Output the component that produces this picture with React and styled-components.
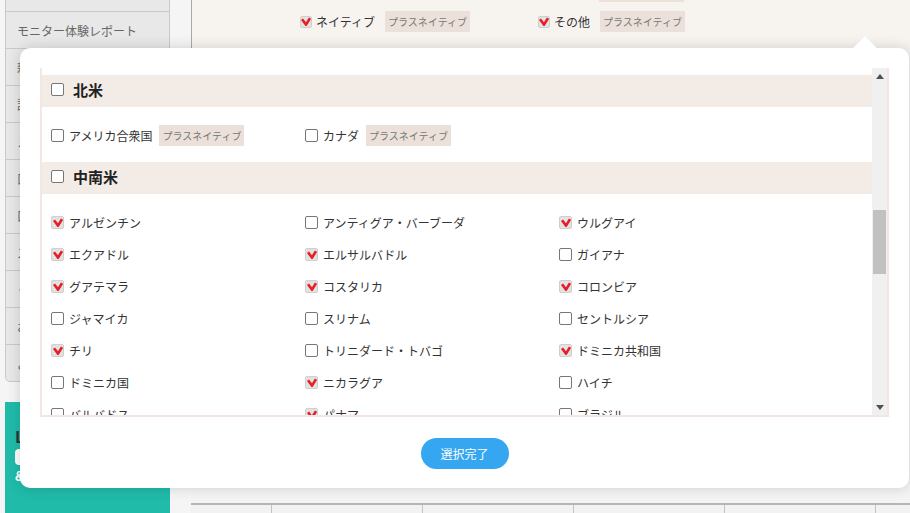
import React, { useLayoutEffect, useRef, useState } from "react";
import styled, { createGlobalStyle } from "styled-components";
import { FaCheck } from "react-icons/fa";

const GlobalStyle = createGlobalStyle`
  html, body {
    margin: 0;
    padding: 0;
    overflow: hidden;
  }
  body {
    font-family: "Noto Sans CJK JP", "Noto Sans", sans-serif;
    color: #333;
    background: #f4f4f4;
  }
`;

const Page = styled.div`
  position: relative;
  display: flex;
  width: 910px;
  height: 513px;
  overflow: hidden;
`;

const Sidebar = styled.aside`
  width: 165px;
  padding: 0 21px 0 5px;
  background: #f5f5f5;
  flex-shrink: 0;
`;

const Menu = styled.ul`
  list-style: none;
  margin: -26px 0 0;
  padding: 0;
  border: 1px solid #c9c9c9;
  border-radius: 0 0 5px 5px;
  background: #e8e8e8;
  overflow: hidden;
`;

const MenuItem = styled.li`
  height: 36px;
  display: flex;
  align-items: center;
  padding-left: 11px;
  font-size: 12px;
  color: #666;
  border-bottom: 1px solid #c9c9c9;
  &:last-child {
    border-bottom: 0;
  }
`;

const Banner = styled.div`
  margin-top: 20px;
  height: 130px;
  background: #20bba9;
  padding: 24px 10px 0;
  display: flex;
  flex-direction: column;
`;

const BannerTitle = styled.div`
  font-size: 16px;
  line-height: 20px;
  font-weight: 700;
  color: #333;
`;

const BannerButton = styled.div`
  margin-top: 3px;
  width: 120px;
  height: 16px;
  border-radius: 4px;
  background: #fff;
`;

const BannerText = styled.div`
  margin-top: 3px;
  font-size: 13px;
  line-height: 16px;
  color: #fff;
  font-weight: 700;
`;

const Main = styled.main`
  flex: 1;
  display: flex;
  flex-direction: column;
  background: #f4f4f4;
`;

const FilterBar = styled.div`
  flex-shrink: 0;
  height: 48px;
  box-sizing: border-box;
  padding: 11px 10px 0 108px;
  border-left: 1px solid #a9a9a9;
  background: #f7f4f0;
  display: flex;
  align-items: flex-start;
  justify-content: space-between;
  overflow: hidden;
`;

const FilterGrid = styled.div`
  margin-top: -30px;
  display: grid;
  grid-template-columns: 238px 238px;
  row-gap: 9px;
`;

const Option = styled.label`
  display: flex;
  align-items: center;
  height: ${(p) => p.$h || 21}px;
  font-size: 12px;
  color: #333;
  white-space: nowrap;
`;

const Label = styled.span`
  margin-left: ${(p) => p.$gap || 5}px;
`;

const Tag = styled.span`
  margin-left: ${(p) => p.$gap || 7}px;
  height: 21px;
  line-height: 21px;
  padding: 0 3px;
  font-size: 10px;
  color: #777;
  background: #ece1da;
`;

const Customize = styled.a`
  display: flex;
  align-items: center;
  gap: 4px;
  height: 21px;
  font-size: 12px;
  color: #333;
  span {
    text-decoration: underline;
  }
  svg {
    color: #444;
  }
`;

const Content = styled.div`
  flex: 1;
  padding-top: 455px;
`;

const TableHead = styled.div`
  display: grid;
  grid-template-columns: 80px repeat(5, 151px);
  border-top: 2px solid #b5b5b5;
  height: 20px;
`;

const HeadCell = styled.div`
  background: #f2f2f2;
  border-left: 1px solid #c4c4c4;
  &:first-child {
    border-left: 0;
  }
`;

const Modal = styled.div`
  position: absolute;
  left: 20px;
  top: 48px;
  width: 889px;
  height: 440px;
  box-sizing: border-box;
  padding: 20px 20px 0;
  background: #fff;
  border-radius: 10px;
  box-shadow: 0 0 14px rgba(0, 0, 0, 0.16);
  display: flex;
  flex-direction: column;
`;

const Notch = styled.div`
  position: absolute;
  top: -8px;
  right: 35px;
  width: 18px;
  height: 18px;
  background: #fff;
  transform: rotate(45deg);
`;

const ScrollFrame = styled.div`
  display: flex;
  height: 349px;
  box-sizing: border-box;
  border: 2px solid #f4e6e2;
  border-top: 0;
  background: #fff;
`;

const ScrollBody = styled.div`
  position: relative;
  flex: 1;
  overflow: hidden;
`;

const ScrollBar = styled.div`
  width: 15px;
  flex-shrink: 0;
  display: flex;
  flex-direction: column;
  background: #f0f0f0;
`;

const ArrowButton = styled.div`
  height: 16px;
  display: flex;
  align-items: center;
  justify-content: center;
`;

const Track = styled.div`
  position: relative;
  flex: 1;
`;

const Thumb = styled.div`
  position: absolute;
  left: 1px;
  right: 1px;
  background: #c1c1c1;
`;

const GroupHead = styled.div`
  height: 32px;
  box-sizing: border-box;
  padding: 0 0 4px 9px;
  display: flex;
  align-items: center;
  gap: 9px;
  background: #f3ebe6;
  font-size: 15px;
  font-weight: 700;
  color: #222;
`;

const GroupList = styled.div`
  display: grid;
  grid-template-columns: repeat(3, 254px);
  grid-auto-rows: 32px;
  padding: 12px 0 11px 9px;
`;

const Footer = styled.div`
  display: flex;
  justify-content: center;
  padding-top: 21px;
`;

const DoneButton = styled.button`
  width: 88px;
  height: 31px;
  border: 0;
  border-radius: 16px;
  background: #35a7f1;
  color: #fff;
  font-family: inherit;
  font-size: 12px;
`;

const Box = styled.span`
  width: ${(p) => p.$size}px;
  height: ${(p) => p.$size}px;
  box-sizing: border-box;
  flex-shrink: 0;
  border-radius: 2px;
  border: 1px solid ${(p) => (p.$checked ? "#cfcfcf" : "#767676")};
  background: ${(p) => (p.$checked ? "#e2e2e2" : "#fff")};
  display: inline-flex;
  align-items: center;
  justify-content: center;
`;

function Check({ checked, size = 13 }) {
  return (
    <Box $checked={checked} $size={size}>
      {checked && (
        <svg width="10" height="9" viewBox="0 0 10 9">
          <path
            d="M1 2.2 L5 7.6 L9 1.2"
            fill="none"
            stroke="#ea1c24"
            strokeWidth="2.6"
            strokeLinejoin="miter"
          />
        </svg>
      )}
    </Box>
  );
}

function Arrow({ down }) {
  return (
    <svg width="8" height="5" viewBox="0 0 8 5">
      <polygon points={down ? "0,0 8,0 4,5" : "0,5 8,5 4,0"} fill="#505050" />
    </svg>
  );
}

const menu = [
  "マイページ",
  "モニター体験レポート",
  "新着情報",
  "評価・口コミ",
  "メッセージ",
  "口座情報",
  "口コミ一覧",
  "ストア",
  "くじ引き",
  "お気に入り",
  "よくある質問",
];

const c = (name, checked = false, tag = false) => ({ name, checked, tag });

const groups = [
  {
    name: "アジア",
    items: [
      "インド", "インドネシア", "韓国", "カンボジア", "シンガポール", "スリランカ",
      "タイ", "台湾", "中国", "ネパール", "パキスタン", "バングラデシュ",
      "フィリピン", "ブータン", "ブルネイ", "ベトナム", "香港", "マカオ",
      "マレーシア", "ミャンマー", "モルディブ", "モンゴル", "ラオス", "東ティモール",
    ].map((n) => c(n, true)),
  },
  {
    name: "ヨーロッパ",
    items: [
      "アイスランド", "アイルランド", "イギリス", "イタリア", "ウクライナ", "エストニア",
      "オーストリア", "オランダ", "ギリシャ", "クロアチア", "スイス", "スウェーデン",
      "スペイン", "スロバキア", "スロベニア", "セルビア", "チェコ", "デンマーク",
      "ドイツ", "ノルウェー", "ハンガリー", "フィンランド", "フランス", "ブルガリア",
      "ベルギー", "ポーランド", "ポルトガル", "マルタ", "ラトビア", "ルーマニア",
    ].map((n) => c(n, true)),
  },
  {
    name: "北米",
    target: true,
    items: [c("アメリカ合衆国", false, true), c("カナダ", false, true)],
  },
  {
    name: "中南米",
    items: [
      c("アルゼンチン", true), c("アンティグア・バーブーダ"), c("ウルグアイ", true),
      c("エクアドル", true), c("エルサルバドル", true), c("ガイアナ"),
      c("グアテマラ", true), c("コスタリカ", true), c("コロンビア", true),
      c("ジャマイカ"), c("スリナム"), c("セントルシア"),
      c("チリ", true), c("トリニダード・トバゴ"), c("ドミニカ共和国", true),
      c("ドミニカ国"), c("ニカラグア", true), c("ハイチ"),
      c("バルバドス"), c("パナマ", true), c("ブラジル"),
      c("ベネズエラ", true), c("ベリーズ"), c("ペルー", true),
      c("ボリビア", true), c("ホンジュラス", true), c("メキシコ", true),
    ],
  },
  {
    name: "オセアニア",
    items: [
      "オーストラリア", "キリバス", "サモア", "ソロモン諸島", "ツバル", "トンガ",
      "ニュージーランド", "バヌアツ", "パプアニューギニア", "パラオ", "フィジー", "マーシャル諸島",
    ].map((n) => c(n)),
  },
  {
    name: "中東",
    items: [
      "アラブ首長国連邦", "イエメン", "イスラエル", "イラク", "イラン", "オマーン",
      "カタール", "クウェート", "サウジアラビア", "シリア", "トルコ", "バーレーン",
      "ヨルダン", "レバノン", "パレスチナ",
    ].map((n) => c(n)),
  },
  {
    name: "アフリカ",
    items: [
      "エジプト", "エチオピア", "ガーナ", "カメルーン", "ケニア", "セネガル",
      "タンザニア", "チュニジア", "ナイジェリア", "南アフリカ", "モロッコ", "ルワンダ",
    ].map((n) => c(n)),
  },
];

export default function App() {
  const scrollRef = useRef(null);
  const targetRef = useRef(null);
  const trackRef = useRef(null);
  const [thumb, setThumb] = useState({ top: 0, height: 0 });

  useLayoutEffect(() => {
    const el = scrollRef.current;
    if (!el || !targetRef.current || !trackRef.current) return;
    el.scrollTop = targetRef.current.offsetTop - 7;
    const track = trackRef.current.clientHeight;
    const ratio = track / el.scrollHeight;
    setThumb({
      top: Math.round(el.scrollTop * ratio),
      height: Math.round(el.clientHeight * ratio),
    });
  }, []);

  return (
    <>
      <GlobalStyle />
      <Page>
        <Sidebar>
          <Menu>
            {menu.map((m) => (
              <MenuItem key={m}>{m}</MenuItem>
            ))}
          </Menu>
          <Banner>
            <BannerTitle>LINE</BannerTitle>
            <BannerButton />
            <BannerText>& 友だち追加</BannerText>
          </Banner>
        </Sidebar>

        <Main>
          <FilterBar>
            <FilterGrid>
              <Option>
                <Check checked size={12} />
                <Label $gap={4}>ノンネイティブ</Label>
              </Option>
              <Option>
                <Check checked size={12} />
                <Label $gap={4}>ハーフ</Label>
                <Tag $gap={10}>プラスネイティブ</Tag>
              </Option>
              <Option>
                <Check checked size={12} />
                <Label $gap={4}>ネイティブ</Label>
                <Tag $gap={10}>プラスネイティブ</Tag>
              </Option>
              <Option>
                <Check checked size={12} />
                <Label $gap={4}>その他</Label>
                <Tag $gap={10}>プラスネイティブ</Tag>
              </Option>
            </FilterGrid>
            <Customize>
              <span>カスタマイズ</span>
              <FaCheck size={15} />
            </Customize>
          </FilterBar>
          <Content>
            <TableHead>
              {Array.from({ length: 6 }).map((_, i) => (
                <HeadCell key={i} />
              ))}
            </TableHead>
          </Content>
        </Main>

        <Modal>
          <Notch />
          <ScrollFrame>
            <ScrollBody ref={scrollRef}>
              {groups.map((g) => (
                <section key={g.name}>
                  <GroupHead ref={g.target ? targetRef : undefined}>
                    <Check checked={false} />
                    <span>{g.name}</span>
                  </GroupHead>
                  <GroupList>
                    {g.items.map((it) => (
                      <Option key={it.name} $h={32}>
                        <Check checked={it.checked} />
                        <Label>{it.name}</Label>
                        {it.tag && <Tag>プラスネイティブ</Tag>}
                      </Option>
                    ))}
                  </GroupList>
                </section>
              ))}
            </ScrollBody>
            <ScrollBar>
              <ArrowButton>
                <Arrow />
              </ArrowButton>
              <Track ref={trackRef}>
                <Thumb style={{ top: thumb.top, height: thumb.height }} />
              </Track>
              <ArrowButton>
                <Arrow down />
              </ArrowButton>
            </ScrollBar>
          </ScrollFrame>
          <Footer>
            <DoneButton>選択完了</DoneButton>
          </Footer>
        </Modal>
      </Page>
    </>
  );
}
